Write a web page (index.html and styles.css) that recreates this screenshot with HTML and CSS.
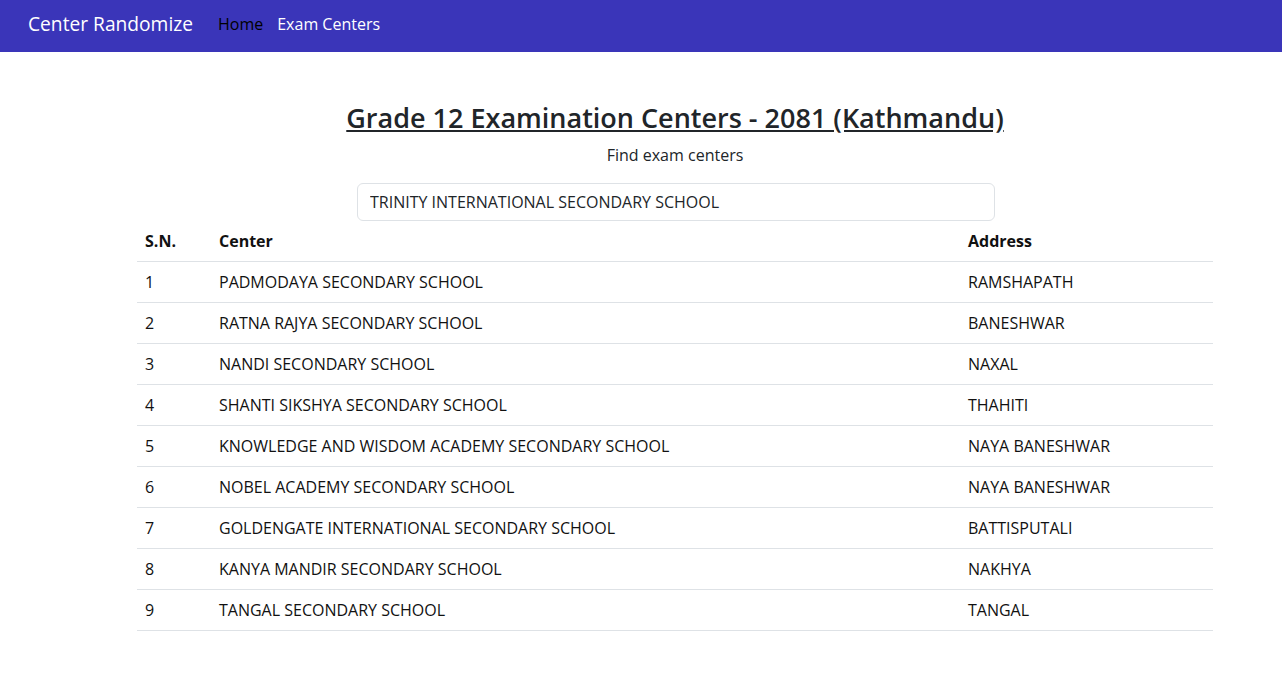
FILE: index.html
```html
<!DOCTYPE html>
<html>
<head>
<meta charset="utf-8">
<link rel="stylesheet" href="styles.css">
</head>
<body>
<nav class="navbar">
  <a class="brand" href="#">Center Randomize</a>
  <a class="nav-link active" href="#">Home</a>
  <a class="nav-link" href="#">Exam Centers</a>
</nav>
<main class="main">
  <h1 class="title">Grade 12 Examination Centers - 2081 (Kathmandu)</h1>
  <p class="subtitle">Find exam centers</p>
  <div class="search-wrap">
    <input class="search" type="text" value="TRINITY INTERNATIONAL SECONDARY SCHOOL">
  </div>
  <table class="table">
    <thead>
      <tr><th class="c-sn">S.N.</th><th class="c-center">Center</th><th>Address</th></tr>
    </thead>
    <tbody>
      <tr><td>1</td><td>PADMODAYA SECONDARY SCHOOL</td><td>RAMSHAPATH</td></tr>
      <tr><td>2</td><td>RATNA RAJYA SECONDARY SCHOOL</td><td>BANESHWAR</td></tr>
      <tr><td>3</td><td>NANDI SECONDARY SCHOOL</td><td>NAXAL</td></tr>
      <tr><td>4</td><td>SHANTI SIKSHYA SECONDARY SCHOOL</td><td>THAHITI</td></tr>
      <tr><td>5</td><td>KNOWLEDGE AND WISDOM ACADEMY SECONDARY SCHOOL</td><td>NAYA BANESHWAR</td></tr>
      <tr><td>6</td><td>NOBEL ACADEMY SECONDARY SCHOOL</td><td>NAYA BANESHWAR</td></tr>
      <tr><td>7</td><td>GOLDENGATE INTERNATIONAL SECONDARY SCHOOL</td><td>BATTISPUTALI</td></tr>
      <tr><td>8</td><td>KANYA MANDIR SECONDARY SCHOOL</td><td>NAKHYA</td></tr>
      <tr><td>9</td><td>TANGAL SECONDARY SCHOOL</td><td>TANGAL</td></tr>
    </tbody>
  </table>
</main>
</body>
</html>
```
FILE: styles.css
```css
* { box-sizing: border-box; }
body {
  margin: 0;
  font-family: "Open Sans", "Noto Sans", sans-serif;
  font-size: 16px;
  line-height: 24px;
  color: #212529;
  background: #fff;
}
.navbar {
  display: flex;
  align-items: center;
  height: 52px;
  padding: 0 28px 4px;
  background: #3a35b9;
}
.brand {
  color: #fff;
  font-size: 19.2px;
  text-decoration: none;
  margin-right: 25px;
}
.nav-link {
  color: #fff;
  text-decoration: none;
  margin-right: 14px;
}
.nav-link.active { color: #000; }
.main {
  margin-left: 137px;
  width: 1076px;
  display: flex;
  flex-direction: column;
  align-items: center;
  padding-top: 48px;
}
.title {
  margin: 0;
  font-size: 27px;
  line-height: 36px;
  font-weight: 600;
  text-decoration: underline;
}
.subtitle {
  margin: 7px 0 16px;
}
.search-wrap {
  width: 638px;
  margin-left: 2px;
}
.search {
  width: 100%;
  height: 38px;
  padding: 6px 12px;
  font: inherit;
  color: #212529;
  border: 1px solid #dee2e6;
  border-radius: 6px;
  outline: none;
}
.table {
  width: 100%;
  table-layout: fixed;
  border-collapse: collapse;
  margin-top: 0;
  color: #111;
}
.table th, .table td {
  text-align: left;
  padding: 8px;
  border-bottom: 1px solid #dee2e6;
}
.table th { font-weight: 700; }
.c-sn { width: 74px; }
.c-center { width: 749px; }
```
